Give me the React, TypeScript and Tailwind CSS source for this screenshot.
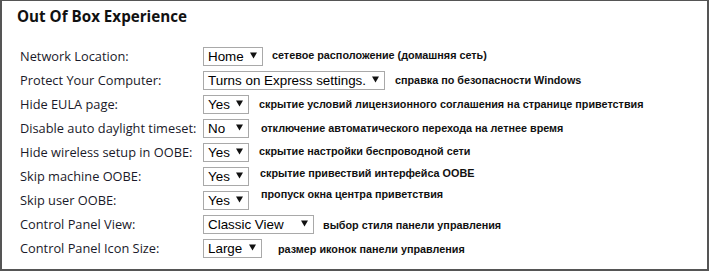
import React from "react";

// Wiersze ustawień OOBE: etykieta, wartość listy, szerokość listy, opis
const rows = [
  { label: "Network Location:", value: "Home", box: "w-[60px]", desc: "сетевое расположение (домашняя сеть)", descCls: "ml-[9px] -mt-[3px]" },
  { label: "Protect Your Computer:", value: "Turns on Express settings.", box: "w-[182px]", desc: "справка по безопасности Windows", descCls: "ml-[10px] -mt-[2px]" },
  { label: "Hide EULA page:", value: "Yes", box: "w-[46px]", desc: "скрытие условий лицензионного соглашения на странице приветствия", descCls: "ml-[10px] -mt-[2px]" },
  { label: "Disable auto daylight timeset:", value: "No", box: "w-[46px]", desc: "отключение автоматического перехода на летнее время", descCls: "ml-[12px] -mt-[2px]" },
  { label: "Hide wireless setup in OOBE:", value: "Yes", box: "w-[46px]", desc: "скрытие настройки беспроводной сети", descCls: "ml-[10px] -mt-[4px]" },
  { label: "Skip machine OOBE:", value: "Yes", box: "w-[46px]", desc: "скрытие привествий интерфейса OOBE", descCls: "ml-[11px] -mt-[7px]" },
  { label: "Skip user OOBE:", value: "Yes", box: "w-[46px]", desc: "пропуск окна центра приветствия", descCls: "ml-[12px] -mt-[13px]" },
  { label: "Control Panel View:", value: "Classic View", box: "w-[111px]", desc: "выбор стиля панели управления", descCls: "ml-[9px]" },
  { label: "Control Panel Icon Size:", value: "Large", box: "w-[59px]", desc: "размер иконок панели управления", descCls: "ml-[16px]" },
];

function FakeSelect({ value, box }: { value: string; box: string }) {
  return (
    <div
      className={`${box} h-[19px] shrink-0 border border-[#a9a9a9] bg-white flex items-center justify-between pl-[4px] pr-[5px] text-[13.4px] leading-none text-black whitespace-nowrap`}
      style={{ fontFamily: '"Liberation Sans", Arial, sans-serif' }}
    >
      <span>{value}</span>
      <svg width="7" height="7" viewBox="0 0 7 7" className="-mt-[2px]">
        <path d="M0 0.5h7L3.5 6.5z" fill="#111" />
      </svg>
    </div>
  );
}

export default function App() {
  return (
    <div className="w-[709px] h-[271px] bg-white border-x-2 border-t border-b-2 border-[#555] overflow-hidden">
      <h2
        className="pl-[15px] pt-[4px] text-[15.2px] font-bold text-[#111]"
        style={{ fontFamily: '"Open Sans", sans-serif' }}
      >
        Out Of Box Experience
      </h2>

      <div className="mt-[17px] pl-[18px] flex flex-col">
        {rows.map((r) => (
          <div key={r.label} className="h-[24px] flex items-center">
            <div
              className="w-[183px] shrink-0 text-[12.8px] text-[#1a1a2a] whitespace-nowrap"
              style={{ fontFamily: '"Open Sans", sans-serif' }}
            >
              {r.label}
            </div>
            <FakeSelect value={r.value} box={r.box} />
            <div
              className={`${r.descCls} text-[10.8px] font-bold text-[#111] whitespace-nowrap`}
              style={{ fontFamily: '"Liberation Sans", Arial, sans-serif' }}
            >
              {r.desc}
            </div>
          </div>
        ))}
      </div>
    </div>
  );
}
